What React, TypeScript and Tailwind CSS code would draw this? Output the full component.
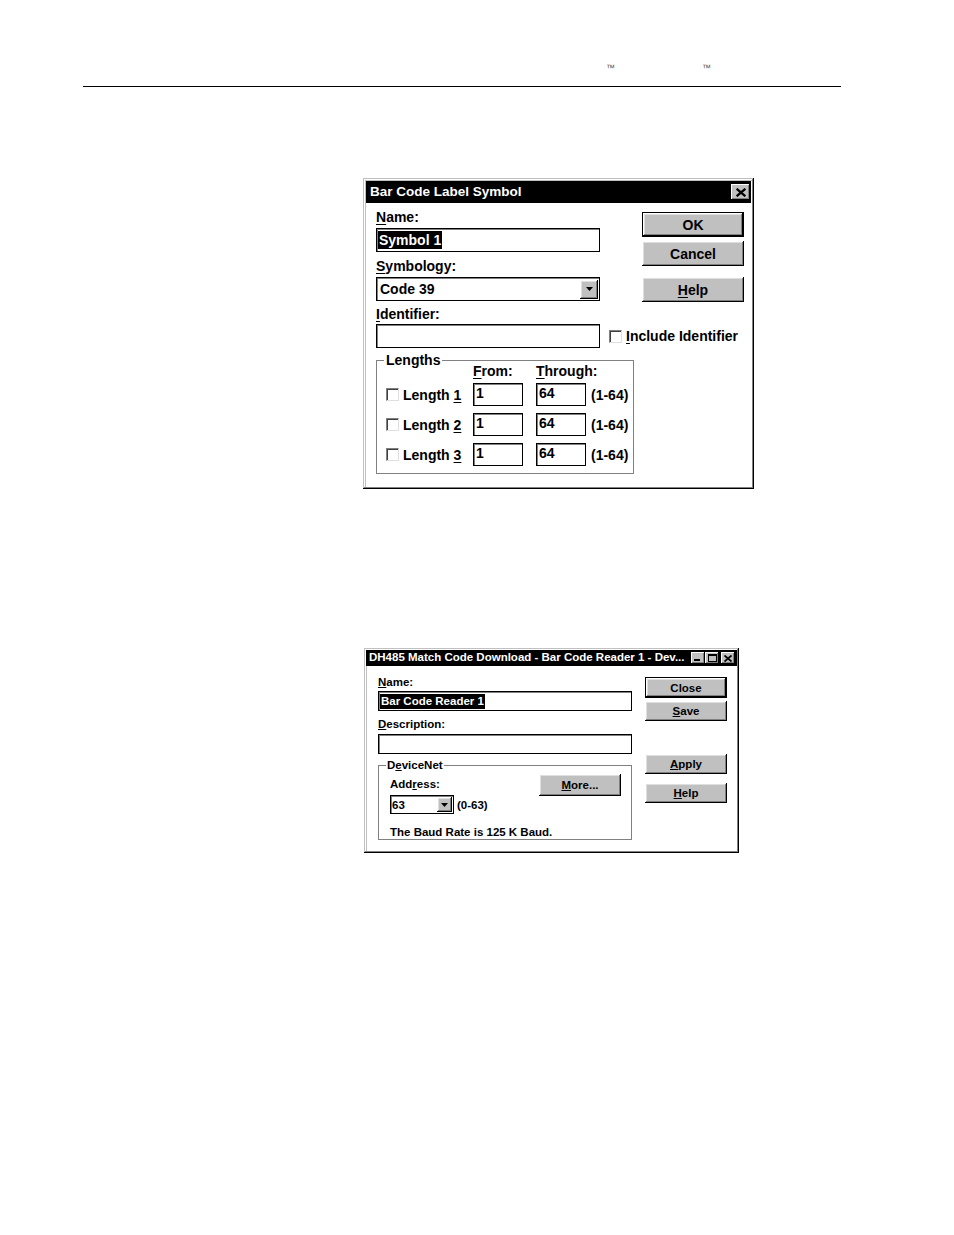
import React from "react";

const frame =
  "shadow-[inset_-1px_-1px_#000,inset_1px_1px_#c0c0c0,inset_-2px_-2px_#808080,inset_2px_2px_#fff,inset_3px_3px_#c0c0c0]";
const bevel =
  "bg-[#c0c0c0] shadow-[inset_-1px_-1px_#000,inset_1px_1px_#fff,inset_-2px_-2px_#808080,inset_2px_2px_#dfdfdf]";
const smallBevel =
  "bg-[#c0c0c0] shadow-[inset_-1px_-1px_#000,inset_1px_1px_#fff,inset_-2px_-2px_#808080]";
const field = "border border-black bg-white shadow-[inset_1px_1px_#808080]";

function Arrow() {
  return (
    <svg width="7" height="4" viewBox="0 0 7 4">
      <path d="M0 0h7L3.5 4z" fill="#000" />
    </svg>
  );
}

function XGlyph({ s = 8 }: { s?: number }) {
  return (
    <svg width={s} height={s - 1} viewBox="0 0 8 7">
      <path d="M0.5 0.5L7.5 6.5M7.5 0.5L0.5 6.5" stroke="#000" strokeWidth="1.8" />
    </svg>
  );
}

function Check() {
  return (
    <span className="block w-[13px] h-[13px] bg-white border border-t-[#808080] border-l-[#808080] border-r-[#dfdfdf] border-b-[#dfdfdf] shadow-[inset_1px_1px_#404040]" />
  );
}

function LengthRow({ n, first }: { n: string; first?: boolean }) {
  return (
    <div className={`flex items-center h-[23px] ${first ? "mt-[4px]" : "mt-[7px]"}`}>
      <div className="w-[87px] flex items-center">
        <Check />
        <span className="ml-[4px]">
          Length <u className="underline-offset-2">{n}</u>
        </span>
      </div>
      <div className={`w-[50px] h-[23px] ${field} pl-[2px] pt-[1px]`}>1</div>
      <div className={`ml-[13px] w-[50px] h-[23px] ${field} pl-[2px] pt-[1px]`}>64</div>
      <span className="ml-[5px]">(1-64)</span>
    </div>
  );
}

function Dialog1() {
  return (
    <div className={`ml-[363px] mt-[91px] w-[391px] h-[311px] bg-white p-[3px] ${frame}`}>
      <div className="h-[22px] bg-black flex items-center justify-between pl-[4px] pr-[1px]">
        <span className="text-white font-bold text-[13.5px] leading-none">Bar Code Label Symbol</span>
        <span className={`w-[19px] h-[16px] flex items-center justify-center ${smallBevel}`}>
          <XGlyph s={10} />
        </span>
      </div>
      <div className="pl-[10px] text-[14px] font-bold leading-[16px]">
        <div className="flex">
          <div className="w-[224px]">
            <div className="mt-[6px]">
              <u className="underline-offset-2">N</u>ame:
            </div>
            <div className={`mt-[3px] h-[24px] ${field} flex items-center pl-[1px]`}>
              <span className="bg-black text-white px-[1px] leading-[18px]">Symbol 1</span>
            </div>
            <div className="mt-[6px]">
              <u className="underline-offset-2">S</u>ymbology:
            </div>
            <div className={`mt-[3px] h-[24px] ${field} flex items-center justify-between pl-[3px] pr-[1px]`}>
              <span>Code 39</span>
              <span className={`w-[18px] h-[19px] flex items-center justify-center ${bevel}`}>
                <Arrow />
              </span>
            </div>
          </div>
          <div className="ml-[42px] w-[102px] flex flex-col">
            <button className={`mt-[9px] h-[25px] ${bevel} border border-black font-bold`}>OK</button>
            <button className={`mt-[4px] h-[25px] ${bevel} font-bold`}>Cancel</button>
            <button className={`mt-[11px] h-[25px] ${bevel} font-bold`}>
              <u className="underline-offset-2">H</u>elp
            </button>
          </div>
        </div>
        <div className="mt-[4px]">
          <u className="underline-offset-2">I</u>dentifier:
        </div>
        <div className="mt-[2px] flex items-center">
          <div className={`w-[224px] h-[24px] ${field}`} />
          <span className="ml-[9px]">
            <Check />
          </span>
          <span className="ml-[4px] whitespace-nowrap">
            <u className="underline-offset-2">I</u>nclude Identifier
          </span>
        </div>
        <div className="relative mt-[12px] w-[258px] h-[114px] border border-[#808080] pl-[9px] pt-[2px]">
          <span className="absolute left-[7px] -top-[9px] bg-white px-[2px]">Lengths</span>
          <div className="flex h-[16px]">
            <span className="w-[87px]" />
            <span className="w-[63px]">
              <u className="underline-offset-2">F</u>rom:
            </span>
            <span>
              <u className="underline-offset-2">T</u>hrough:
            </span>
          </div>
          <LengthRow n="1" first />
          <LengthRow n="2" />
          <LengthRow n="3" />
        </div>
      </div>
    </div>
  );
}

function Dialog2() {
  const btn = `h-[20px] ${bevel} font-bold flex items-center justify-center`;
  return (
    <div className={`ml-[364px] mt-[159px] w-[375px] h-[205px] bg-white p-[2px] ${frame}`}>
      <div className="h-[16px] bg-black flex items-center pl-[3px] pr-[2px]">
        <span className="flex-1 text-white font-bold text-[11.5px] leading-none whitespace-nowrap overflow-hidden">
          DH485 Match Code Download - Bar Code Reader 1 - Dev...
        </span>
        <span className={`w-[14px] h-[12px] ${smallBevel} flex items-end pl-[3px] pb-[3px]`}>
          <span className="block w-[6px] h-[2px] bg-black" />
        </span>
        <span className={`w-[14px] h-[12px] ${smallBevel} flex items-center justify-center`}>
          <span className="block w-[9px] h-[8px] border border-black border-t-2" />
        </span>
        <span className={`ml-[2px] w-[14px] h-[12px] ${smallBevel} flex items-center justify-center`}>
          <XGlyph s={8} />
        </span>
      </div>
      <div className="flex pl-[12px] text-[11.5px] font-bold leading-[14px]">
        <div className="w-[254px]">
          <div className="mt-[9px]">
            <u className="underline-offset-1">N</u>ame:
          </div>
          <div className={`mt-[2px] h-[20px] ${field} flex items-center pl-[1px]`}>
            <span className="bg-black text-white px-[1px] leading-[15px]">Bar Code Reader 1</span>
          </div>
          <div className="mt-[6px]">
            <u className="underline-offset-1">D</u>escription:
          </div>
          <div className={`mt-[3px] h-[20px] ${field}`} />
          <div className="relative mt-[11px] border border-[#808080] flex">
            <span className="absolute left-[7px] -top-[8px] bg-white px-[1px]">
              D<u className="underline-offset-1">e</u>viceNet
            </span>
            <div className="pl-[11px] w-[160px] shrink-0">
              <div className="mt-[11px]">
                Add<u className="underline-offset-1">r</u>ess:
              </div>
              <div className="mt-[4px] flex items-center">
                <div className={`w-[64px] h-[19px] shrink-0 ${field} flex items-center justify-between pl-[1px] pr-[1px]`}>
                  <span>63</span>
                  <span className={`w-[15px] h-[15px] flex items-center justify-center ${bevel}`}>
                    <Arrow />
                  </span>
                </div>
                <span className="ml-[3px] whitespace-nowrap">(0-63)</span>
              </div>
              <div className="mt-[11px] whitespace-nowrap">The Baud Rate is 125 K Baud.</div>
            </div>
            <button className={`ml-auto mr-[10px] mt-[8px] w-[82px] shrink-0 h-[22px] ${bevel} font-bold self-start`}>
              <u className="underline-offset-1">M</u>ore...
            </button>
          </div>
        </div>
        <div className="ml-[13px] w-[82px] flex flex-col">
          <button className={`mt-[11px] h-[21px] ${bevel} border border-black font-bold`}>Close</button>
          <button className={`mt-[3px] ${btn}`}>
            <span>
              <u className="underline-offset-1">S</u>ave
            </span>
          </button>
          <button className={`mt-[33px] ${btn}`}>
            <span>
              <u className="underline-offset-1">A</u>pply
            </span>
          </button>
          <button className={`mt-[9px] ${btn}`}>
            <span>
              <u className="underline-offset-1">H</u>elp
            </span>
          </button>
        </div>
      </div>
    </div>
  );
}

export default function App() {
  return (
    <div className="w-[954px] h-[1235px] bg-white text-black font-['Liberation_Sans',Arial,sans-serif]">
      <div className="h-[86px] flex items-start pt-[64px] pl-[606px] text-[#555]">
        <span className="text-[9px] leading-none">™</span>
        <span className="text-[9px] leading-none ml-[87px]">™</span>
      </div>
      <div className="ml-[83px] w-[758px] h-px bg-black" />
      <Dialog1 />
      <Dialog2 />
    </div>
  );
}
